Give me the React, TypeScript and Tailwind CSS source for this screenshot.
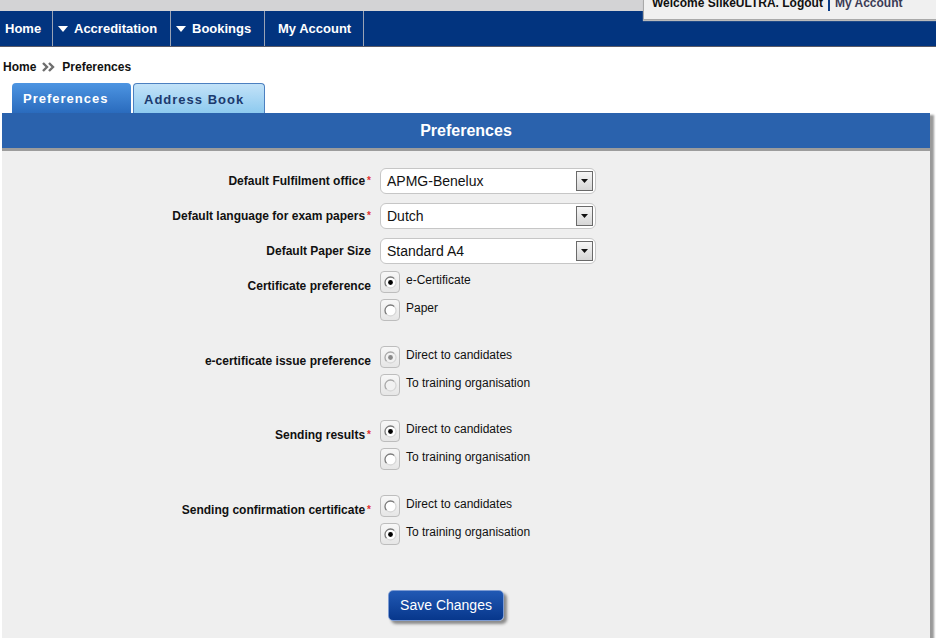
import React from "react";

type RadioOpt = { label: string; checked?: boolean };
type Row =
  | { kind: "select"; label: string; required?: boolean; value: string }
  | { kind: "radio"; label: string; required?: boolean; disabled?: boolean; options: RadioOpt[] };

const rows: Row[] = [
  { kind: "select", label: "Default Fulfilment office", required: true, value: "APMG-Benelux" },
  { kind: "select", label: "Default language for exam papers", required: true, value: "Dutch" },
  { kind: "select", label: "Default Paper Size", value: "Standard A4" },
  {
    kind: "radio",
    label: "Certificate preference",
    options: [{ label: "e-Certificate", checked: true }, { label: "Paper" }],
  },
  {
    kind: "radio",
    label: "e-certificate issue preference",
    disabled: true,
    options: [{ label: "Direct to candidates", checked: true }, { label: "To training organisation" }],
  },
  {
    kind: "radio",
    label: "Sending results",
    required: true,
    options: [{ label: "Direct to candidates", checked: true }, { label: "To training organisation" }],
  },
  {
    kind: "radio",
    label: "Sending confirmation certificate",
    required: true,
    options: [{ label: "Direct to candidates" }, { label: "To training organisation", checked: true }],
  },
];

// top margin of each form row
const rowGaps = ["", "mt-[9px]", "mt-[9px]", "mt-[7px]", "mt-[25px]", "mt-[24px]", "mt-[25px]"];

const Caret = () => (
  <svg width="10" height="6" viewBox="0 0 10 6">
    <path d="M0 0h10L5 6z" fill="#fff" />
  </svg>
);

const RadioDot = ({ checked, disabled }: { checked?: boolean; disabled?: boolean }) => (
  <svg width="13" height="13" viewBox="0 0 13 13">
    <circle cx="6.5" cy="6.5" r="5.5" fill={disabled ? "#f2f2f2" : "#fff"} />
    <path d="M2.6 10.4A5.5 5.5 0 0 1 10.4 2.6" stroke={disabled ? "#a8a8a8" : "#7a7a7a"} strokeWidth="1.3" fill="none" />
    <path d="M10.4 2.6A5.5 5.5 0 0 1 2.6 10.4" stroke="#d8d8d8" strokeWidth="1.3" fill="none" />
    {checked && <circle cx="6.5" cy="6.5" r="2.4" fill={disabled ? "#8a8a8a" : "#000"} />}
  </svg>
);

function Label({ text, required }: { text: string; required?: boolean }) {
  return (
    <span className="text-[12px] font-bold leading-[14px] text-[#111]">
      {text}
      {required && <span className="ml-[2px] text-[10px] text-[#e03030] align-top">*</span>}
    </span>
  );
}

export default function App() {
  return (
    <div
      className="relative w-[936px] h-[638px] overflow-hidden bg-white"
      style={{ fontFamily: '"Liberation Sans", Arial, sans-serif' }}
    >
      {/* welcome box */}
      <div className="absolute right-0 top-0 z-10 h-[20px] w-[293px] overflow-hidden border-l border-b border-[#a9a9a9] bg-[#f0f0f0] shadow-[0_1px_1px_#bbb]">
        <div className="-mt-[5px] flex items-center pl-[8px] text-[12px] font-bold leading-[14px]">
          <span className="text-[#111]">Welcome SilkeULTRA. Logout</span>
          <span className="mx-[5px] inline-block h-[16px] w-[2px] bg-[#0a3d8a]" />
          <span className="text-[#3b3b55]">My Account</span>
        </div>
      </div>

      <div className="h-[11px] bg-[#d3d3d5]" />

      {/* nav */}
      <nav className="flex h-[36px] border-b border-[#5a5a66] bg-[#02347f] text-[13px] font-bold text-white">
        <div className="flex w-[53px] items-center border-r border-[#9aa3b5] pl-[5px]">Home</div>
        <div className="flex w-[118px] items-center gap-[6px] border-r border-[#9aa3b5] pl-[5px]">
          <Caret />
          Accreditation
        </div>
        <div className="flex w-[94px] items-center gap-[6px] border-r border-[#9aa3b5] pl-[5px]">
          <Caret />
          Bookings
        </div>
        <div className="flex w-[99px] items-center border-r border-[#9aa3b5] pl-[13px]">My Account</div>
      </nav>

      {/* breadcrumb */}
      <div className="mt-[13px] flex items-center pl-[3px] text-[12px] font-bold leading-[14px] text-[#111]">
        Home
        <svg className="mx-[6px]" width="14" height="10" viewBox="0 0 14 10">
          <path d="M1 1l4 4-4 4M7 1l4 4-4 4" stroke="#6e6e6e" strokeWidth="2.4" fill="none" />
        </svg>
        Preferences
      </div>

      {/* tabs */}
      <div className="mt-[9px] flex h-[30px] items-end gap-[2px] pl-[12px]">
        <div className="flex h-[30px] w-[119px] items-center rounded-t-[4px] bg-gradient-to-b from-[#4d95e2] to-[#2a6bbd] pl-[11px] pt-[2px] text-[13px] font-bold tracking-[1px] text-white">
          Preferences
        </div>
        <div className="flex h-[30px] w-[132px] items-center rounded-t-[4px] border border-b-0 border-[#4c80c0] bg-gradient-to-b from-[#c2e2f8] to-[#8dcaef] pl-[10px] pt-[2px] text-[13px] font-bold tracking-[1px] text-[#1b3a6e]">
          Address Book
        </div>
      </div>

      {/* panel */}
      <div className="ml-[2px] w-[928px] shadow-[4px_2px_2px_#9a9a9a]">
        <div className="flex h-[35px] items-center justify-center bg-[#2a62ad] text-[16px] font-bold text-white">
          Preferences
        </div>
        <div className="h-[3px] bg-[#9c9c9c]" />
        <div className="bg-[#efefef] pb-[40px] pt-[17px]">
          <div className="grid grid-cols-[369px_1fr] gap-x-[9px]">
            {rows.map((row, i) => {
              const mt = rowGaps[i];
              if (row.kind === "select") {
                return (
                  <React.Fragment key={i}>
                    <div className={`flex items-center justify-end ${mt}`}>
                      <Label text={row.label} required={row.required} />
                    </div>
                    <div className={mt}>
                      <div className="flex h-[26px] w-[216px] items-center justify-between rounded-[6px] border border-[#c6c6c6] bg-white pl-[6px] pr-[2px] text-[14px] text-[#111]">
                        {row.value}
                        <div className="flex h-[20px] w-[17px] items-center justify-center border border-[#6a6a6a] bg-gradient-to-b from-[#f6f6f6] to-[#d6d6d6]">
                          <svg width="7" height="4" viewBox="0 0 7 4">
                            <path d="M0 0h7L3.5 4z" fill="#111" />
                          </svg>
                        </div>
                      </div>
                    </div>
                  </React.Fragment>
                );
              }
              return (
                <React.Fragment key={i}>
                  <div className={`flex items-start justify-end pt-[8px] ${mt}`}>
                    <Label text={row.label} required={row.required} />
                  </div>
                  <div className={`flex flex-col gap-[6px] ${mt}`}>
                    {row.options.map((o) => (
                      <div key={o.label} className="flex items-start gap-[6px]">
                        <div className="flex h-[22px] w-[20px] items-center justify-center rounded-[4px] border border-[#bdbdbd] bg-gradient-to-b from-[#f7f7f7] to-[#e6e6e6]">
                          <RadioDot checked={o.checked} disabled={row.disabled} />
                        </div>
                        <span className="pt-[2px] text-[12px] leading-[14px] text-[#111]">{o.label}</span>
                      </div>
                    ))}
                  </div>
                </React.Fragment>
              );
            })}
            <div />
            <div className="mt-[45px]">
              <button className="ml-[8px] h-[31px] w-[116px] rounded-[5px] border border-[#7d9bd2] bg-gradient-to-b from-[#2159b4] to-[#07378c] text-[14px] text-white shadow-[3px_3px_3px_#8a8a8a]">
                Save Changes
              </button>
            </div>
          </div>
        </div>
      </div>
    </div>
  );
}
